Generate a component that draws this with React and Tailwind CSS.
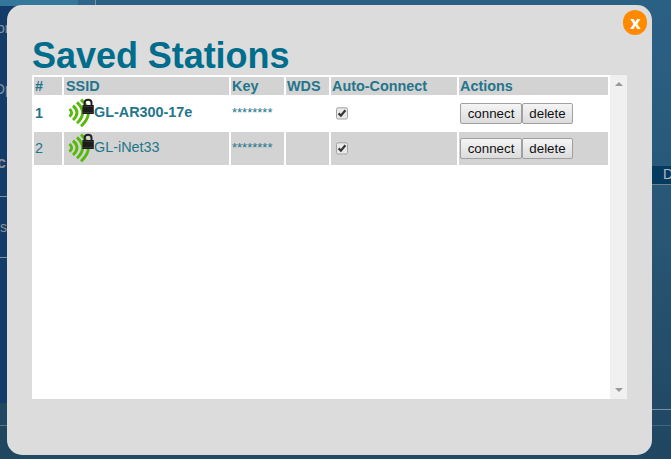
import React from "react";

const stations = [
  { id: 1, ssid: "GL-AR300-17e", active: true },
  { id: 2, ssid: "GL-iNet33", active: false },
];

const COLS = "grid grid-cols-[28px_165px_53px_43px_126px_149px] gap-[2px]";

function SignalIcon() {
  return (
    <svg className="h-[31px] w-[27px] shrink-0" viewBox="0 0 27 31" fill="none">
      <g stroke="#55b80a" strokeWidth="2.9">
        <path d="M2.5 12Q6.9 15.8 2.5 19.6" />
        <path d="M6 8.6Q14 15.8 6 23" />
        <path d="M10 5.4Q21.2 15.8 10 26.2" />
        <path d="M14 2.6Q28.8 15.8 14 29.2" />
      </g>
      <path d="M17.7 9V5.8Q17.7 2.8 21.1 2.8T24.5 5.8V9" stroke="#222" strokeWidth="2" />
      <path d="M15.4 8h11.4v9H15.4z" fill="#1c1c1c" />
      <path d="M16.4 9.5h9.4M16.4 15.5h9.4" stroke="#343434" strokeWidth="1" />
    </svg>
  );
}

function CheckBox() {
  return (
    <svg className="ml-[5px] h-[13px] w-[13px]" viewBox="0 0 13 13" fill="none" role="checkbox" aria-checked="true">
      <rect x="0.5" y="0.8" width="11" height="11.2" rx="1.5" fill="#e9e9e9" stroke="#a3a3a3" />
      <path d="M2.6 6.4L4.9 8.7L9.4 3.2" stroke="#363636" strokeWidth="2.2" />
    </svg>
  );
}

function ActionButton({ className, children }) {
  return (
    <button
      className={`h-[21px] rounded-[2px] border border-[#a0a0a0] bg-linear-to-b from-[#f5f5f5] to-[#dcdcdc] text-center text-[13.333px] leading-[19px] text-[#111] ${className}`}
    >
      {children}
    </button>
  );
}

function Row({ station }) {
  const cell = station.active ? "bg-white" : "bg-[#d3d3d3]";
  const weight = station.active ? "font-bold" : "font-normal";
  return (
    <div className={`${COLS} h-[33px]`}>
      <div className={`${cell} ${weight} flex items-center pl-px`}>{station.id}</div>
      <div className={`${cell} ${weight} flex pl-[3px]`}>
        <SignalIcon />
        <span className="pt-[6px] leading-[18px]">{station.ssid}</span>
      </div>
      <div className={`${cell} pt-[7px] pl-px text-[13px] leading-[18px]`}>********</div>
      <div className={cell} />
      <div className={`${cell} flex items-start pt-[10px]`}><CheckBox /></div>
      <div className={`${cell} flex items-start pt-[6px] pl-px`}>
        <ActionButton className="w-[62px]">connect</ActionButton>
        <ActionButton className="w-[51px]">delete</ActionButton>
      </div>
    </div>
  );
}

function Backdrop() {
  return (
    <div className="flex h-full flex-col">
      <div className="flex h-[6px] shrink-0">
        <div className="w-[78px] bg-[#34779b]" />
        <div className="w-[17px] bg-[#2e668b]" />
        <div className="w-px bg-[#7f91a3]" />
        <div className="flex-1 bg-[#2b6085]" />
      </div>
      <div className="flex min-h-0 flex-1 justify-between">
        <div className="flex w-5 flex-col overflow-hidden bg-linear-to-b from-[#25516b] to-[#204660] whitespace-nowrap text-[#8c929a]">
          <div className="h-[397px] shrink-0 bg-[#143c6b]">
            <div className="-ml-[3px] h-[60px] pt-[13px] text-[14px] leading-[18px]">on</div>
            <div className="-ml-[6px] h-[72px] pt-[14px] text-[14px] leading-[18px]">Op</div>
            <div className="-ml-[3px] h-[52px] pt-[16px] text-[16px] leading-[18px] font-bold">c</div>
            <div className="mt-[6px] h-[62px] border-y border-[#7b8f9e] pt-[21px] text-[14px] leading-[18px]">s</div>
          </div>
          <div className="h-[23px] shrink-0 border-b border-[#587486]" />
        </div>
        <div className="flex w-[30px] flex-col overflow-hidden bg-linear-to-b from-[#2b6085] via-[#285675] to-[#204661]">
          <div className="h-[160px] shrink-0" />
          <div className="h-[18px] shrink-0 bg-[#063b61] pl-[22px] text-[14px] leading-[17px] text-[#b4b9bd]">D</div>
          <div className="h-px shrink-0 bg-[#6f7e87]" />
          <div className="h-[225px] shrink-0 border-b border-[#7890a8]" />
          <div className="h-[16px] shrink-0 border-b border-[#42657f]" />
        </div>
      </div>
    </div>
  );
}

export default function App() {
  return (
    <div className="relative h-[459px] w-[671px] overflow-hidden bg-[#214a65] font-['Liberation_Sans',Arial,sans-serif]">
      <Backdrop />
      <div className="absolute top-[5px] left-[7px] h-[450px] w-[645px] rounded-[15px] bg-[#dcdcdc] px-[25px] pt-[30px]">
        <button
          aria-label="Close"
          className="absolute top-[5px] right-[5px] h-[25px] w-[24px] rounded-full bg-[#ff8a00] pl-px text-center font-['Open_Sans',sans-serif] text-[18px] leading-[19px] font-bold text-white"
        >
          x
        </button>
        <h1 className="h-[40px] text-[36px] leading-[41px] font-bold tracking-[-0.05px] text-[#006d8c]">Saved Stations</h1>
        <div className="flex h-[324px] bg-white">
          <div className="flex w-[578px] flex-col gap-[2px] p-[2px] text-[14.4px] text-[#24758b]">
            <div className={`${COLS} h-[18px] leading-[18px] font-bold`}>
              {["#", "SSID", "Key", "WDS", "Auto-Connect", "Actions"].map((name) => (
                <div key={name} className={`bg-[#d3d3d3] ${name === "SSID" ? "pl-[2px]" : "pl-px"}`}>{name}</div>
              ))}
            </div>
            {stations.map((s) => <Row key={s.id} station={s} />)}
          </div>
          <div className="flex w-[17px] flex-col items-center justify-between bg-[#f0f0f0] pt-[7px] pb-[7px]">
            <svg className="h-[4px] w-[8px]" viewBox="0 0 8 4"><path d="M4 0L8 4H0z" fill="#989898" /></svg>
            <svg className="h-[4px] w-[8px]" viewBox="0 0 8 4"><path d="M0 0H8L4 4z" fill="#989898" /></svg>
          </div>
        </div>
      </div>
    </div>
  );
}
